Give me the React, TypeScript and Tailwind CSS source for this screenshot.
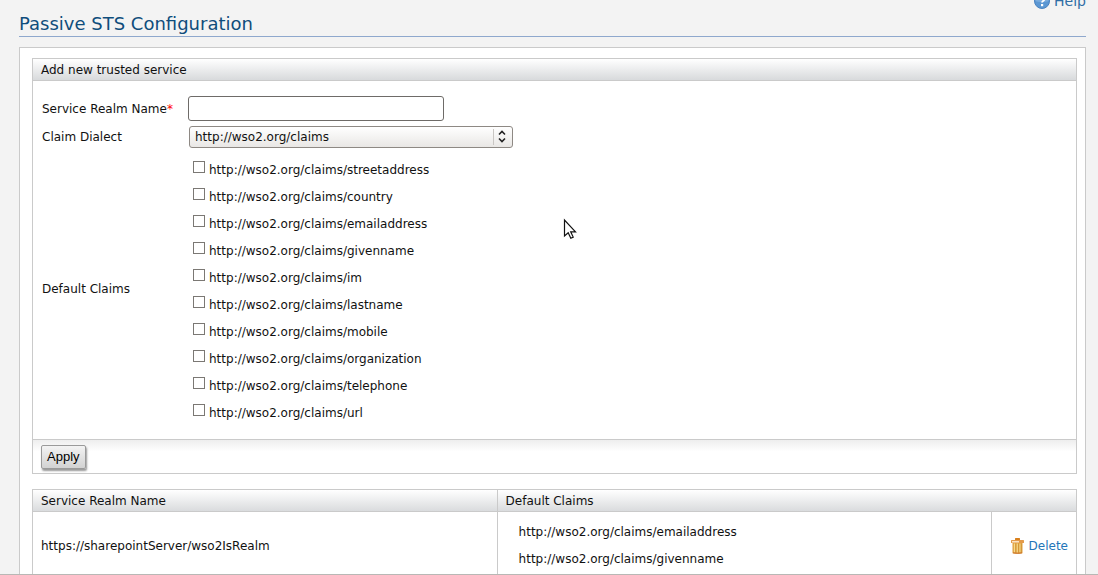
import { useState } from 'react';

const CLAIMS = [
  'streetaddress',
  'country',
  'emailaddress',
  'givenname',
  'im',
  'lastname',
  'mobile',
  'organization',
  'telephone',
  'url',
].map((name) => `http://wso2.org/claims/${name}`);

const SERVICES = [
  {
    realm: 'https://sharepointServer/wso2IsRealm',
    claims: ['http://wso2.org/claims/emailaddress', 'http://wso2.org/claims/givenname'],
  },
];

function HelpIcon() {
  return (
    <svg width="16" height="16" viewBox="0 0 16 16" aria-hidden="true">
      <circle cx="8" cy="8" r="7.5" fill="#5b97d3" stroke="#4a83c0" />
      <path d="M1.500 8a6.500 6.500 0 0 1 13 0c-3 1.500-10 1.500-13 0z" fill="#79abdc" />
      <path d="M5.700 6.200c0-3 4.800-3 4.800-.2 0 1.700-2.400 1.800-2.400 3.600" fill="none" stroke="#fff" strokeWidth="1.900" />
      <rect x="7" y="11" width="2.200" height="2.200" fill="#fff" />
    </svg>
  );
}

function TrashIcon() {
  return (
    <svg width="14" height="16" viewBox="0 0 14 16" aria-hidden="true">
      <rect x="4" y="0" width="5" height="2" rx=".5" fill="#d9801c" />
      <rect x="0" y="2" width="13" height="3" rx=".5" fill="#e39a4a" />
      <rect x="1" y="3" width="7" height="1.500" fill="#fae3c4" />
      <path d="M1.500 5h10v10.200q-5 1.300-10 0z" fill="#e2a040" />
      <path d="M3.500 5.500v9M6.200 5.500v9M9 5.500v9" stroke="#f5da8c" strokeWidth="1.300" />
      <path d="M4.800 5.500v9M7.600 5.500v9M10.300 5.500v9" stroke="#cf9434" strokeWidth=".8" />
      <path d="M2 14.800q5 1 9 0" stroke="#c9702a" fill="none" />
    </svg>
  );
}

function Pointer() {
  return (
    <svg
      className="pointer-events-none absolute left-[563px] top-[218px]"
      width="14"
      height="22"
      viewBox="0 0 14 22"
      aria-hidden="true"
    >
      <path
        d="M1.500 2v16l3.700-3.300 2.600 5.500 2.400-1.100-2.500-5.300h4.800z"
        fill="#fff"
        stroke="#111"
        strokeWidth="1.200"
      />
    </svg>
  );
}

function TrustedServiceForm() {
  const [realm, setRealm] = useState('');
  return (
    <form className="border border-[#cacaca]" onSubmit={(e) => e.preventDefault()}>
      <h2 className="border-b border-[#cacaca] bg-linear-to-b from-white to-[#d8dadc] px-2 pt-px leading-5">
        Add new trusted service
      </h2>
      <div className="grid grid-cols-[146px_1fr] items-center gap-y-1 px-[9px] pt-[15px] pb-[15px]">
        <label htmlFor="realm">
          Service Realm Name<span className="text-[#ff0000]">*</span>
        </label>
        <input
          id="realm"
          type="text"
          value={realm}
          onChange={(e) => setRealm(e.target.value)}
          className="h-[25px] w-64 rounded-[3px] border border-[#6e6b68] bg-white px-1"
        />
        <label htmlFor="dialect">Claim Dialect</label>
        <div className="relative h-6 w-[325px] py-px pl-px">
          <select
            id="dialect"
            className="h-[22px] w-full appearance-none rounded-[3px] border border-[#8e8984] bg-linear-to-b from-white to-[#e9e7e5] pl-[5px]"
          >
            <option>http://wso2.org/claims</option>
          </select>
          <svg
            className="pointer-events-none absolute right-0 top-px"
            width="20"
            height="22"
            viewBox="0 0 20 22"
            aria-hidden="true"
          >
            <path d="M.5 3v16" stroke="#c9c6c3" />
            <path d="M6 8.500l3-3 3 3M6 12.500l3 3 3-3" fill="none" stroke="#222" strokeWidth="1.600" />
          </svg>
        </div>
        <span id="claims-label">Default Claims</span>
        <ul aria-labelledby="claims-label" className="pt-px">
          {CLAIMS.map((claim) => (
            <li key={claim} className="flex h-[27px] pl-[5px]">
              <label className="flex items-start gap-1">
                <input
                  type="checkbox"
                  className="mt-[7px] size-3 appearance-none border border-[#7b7874] bg-white checked:bg-[#5b97d3]"
                />
                <span className="pt-2 leading-4">{claim}</span>
              </label>
            </li>
          ))}
        </ul>
      </div>
      <div className="border-t border-[#cacaca] bg-linear-to-b from-[#eeeeee] to-white to-35% px-2 pt-[5px] pb-1">
        <button
          type="submit"
          className="block h-6 rounded-[2px] border border-[#9a9a9a] bg-linear-to-b from-[#f3f3f3] to-[#d2d2d2] px-[5px] font-['Liberation_Sans',sans-serif] text-[13px] leading-[22px] text-black shadow-[1px_2px_2px_#999999]"
        >
          Apply
        </button>
      </div>
    </form>
  );
}

function ServiceTable() {
  return (
    <table className="mt-[15px] w-full table-fixed border-collapse border border-[#cacaca]">
      <colgroup>
        <col className="w-[44.5%]" />
        <col />
        <col className="w-[85px]" />
      </colgroup>
      <thead>
        <tr className="bg-linear-to-b from-white to-[#d8dadc] text-left">
          <th className="border border-[#cacaca] px-2 pt-px leading-5 font-normal">Service Realm Name</th>
          <th colSpan={2} className="border border-[#cacaca] px-2 pt-px leading-5 font-normal">
            Default Claims
          </th>
        </tr>
      </thead>
      <tbody>
        {SERVICES.map((service) => (
          <tr key={service.realm}>
            <td className="border border-[#cacaca] px-2">{service.realm}</td>
            <td className="border border-[#cacaca] px-[21px] py-[7px]">
              {service.claims.map((claim) => (
                <div key={claim} className="leading-[27px]">
                  {claim}
                </div>
              ))}
            </td>
            <td className="border border-[#cacaca] px-2">
              <a href="#delete" className="flex items-center justify-end gap-1 text-[#2375b8]">
                <TrashIcon />
                Delete
              </a>
            </td>
          </tr>
        ))}
      </tbody>
    </table>
  );
}

export default function App() {
  return (
    <div className="relative h-screen overflow-hidden border-b border-[#b8b8b5] bg-[#f3f3f3] pr-3 pl-[19px] font-['DejaVu_Sans',sans-serif] text-[12px] leading-4 text-[#111111]">
      <div className="-mt-[7px] flex h-4 justify-end">
        <a href="#help" className="flex items-center gap-1 text-[14px] text-[#2f6ea5]">
          <HelpIcon />
          Help
        </a>
      </div>
      <h1 className="border-b border-[#8fa8cd] pt-[3px] text-[18px] leading-6 text-[#0f4d7c]">
        Passive STS Configuration
      </h1>
      <main className="mt-[10px] border border-[#cacaca] bg-white pt-[10px] pr-2 pb-4 pl-3">
        <TrustedServiceForm />
        <ServiceTable />
      </main>
      <Pointer />
    </div>
  );
}
